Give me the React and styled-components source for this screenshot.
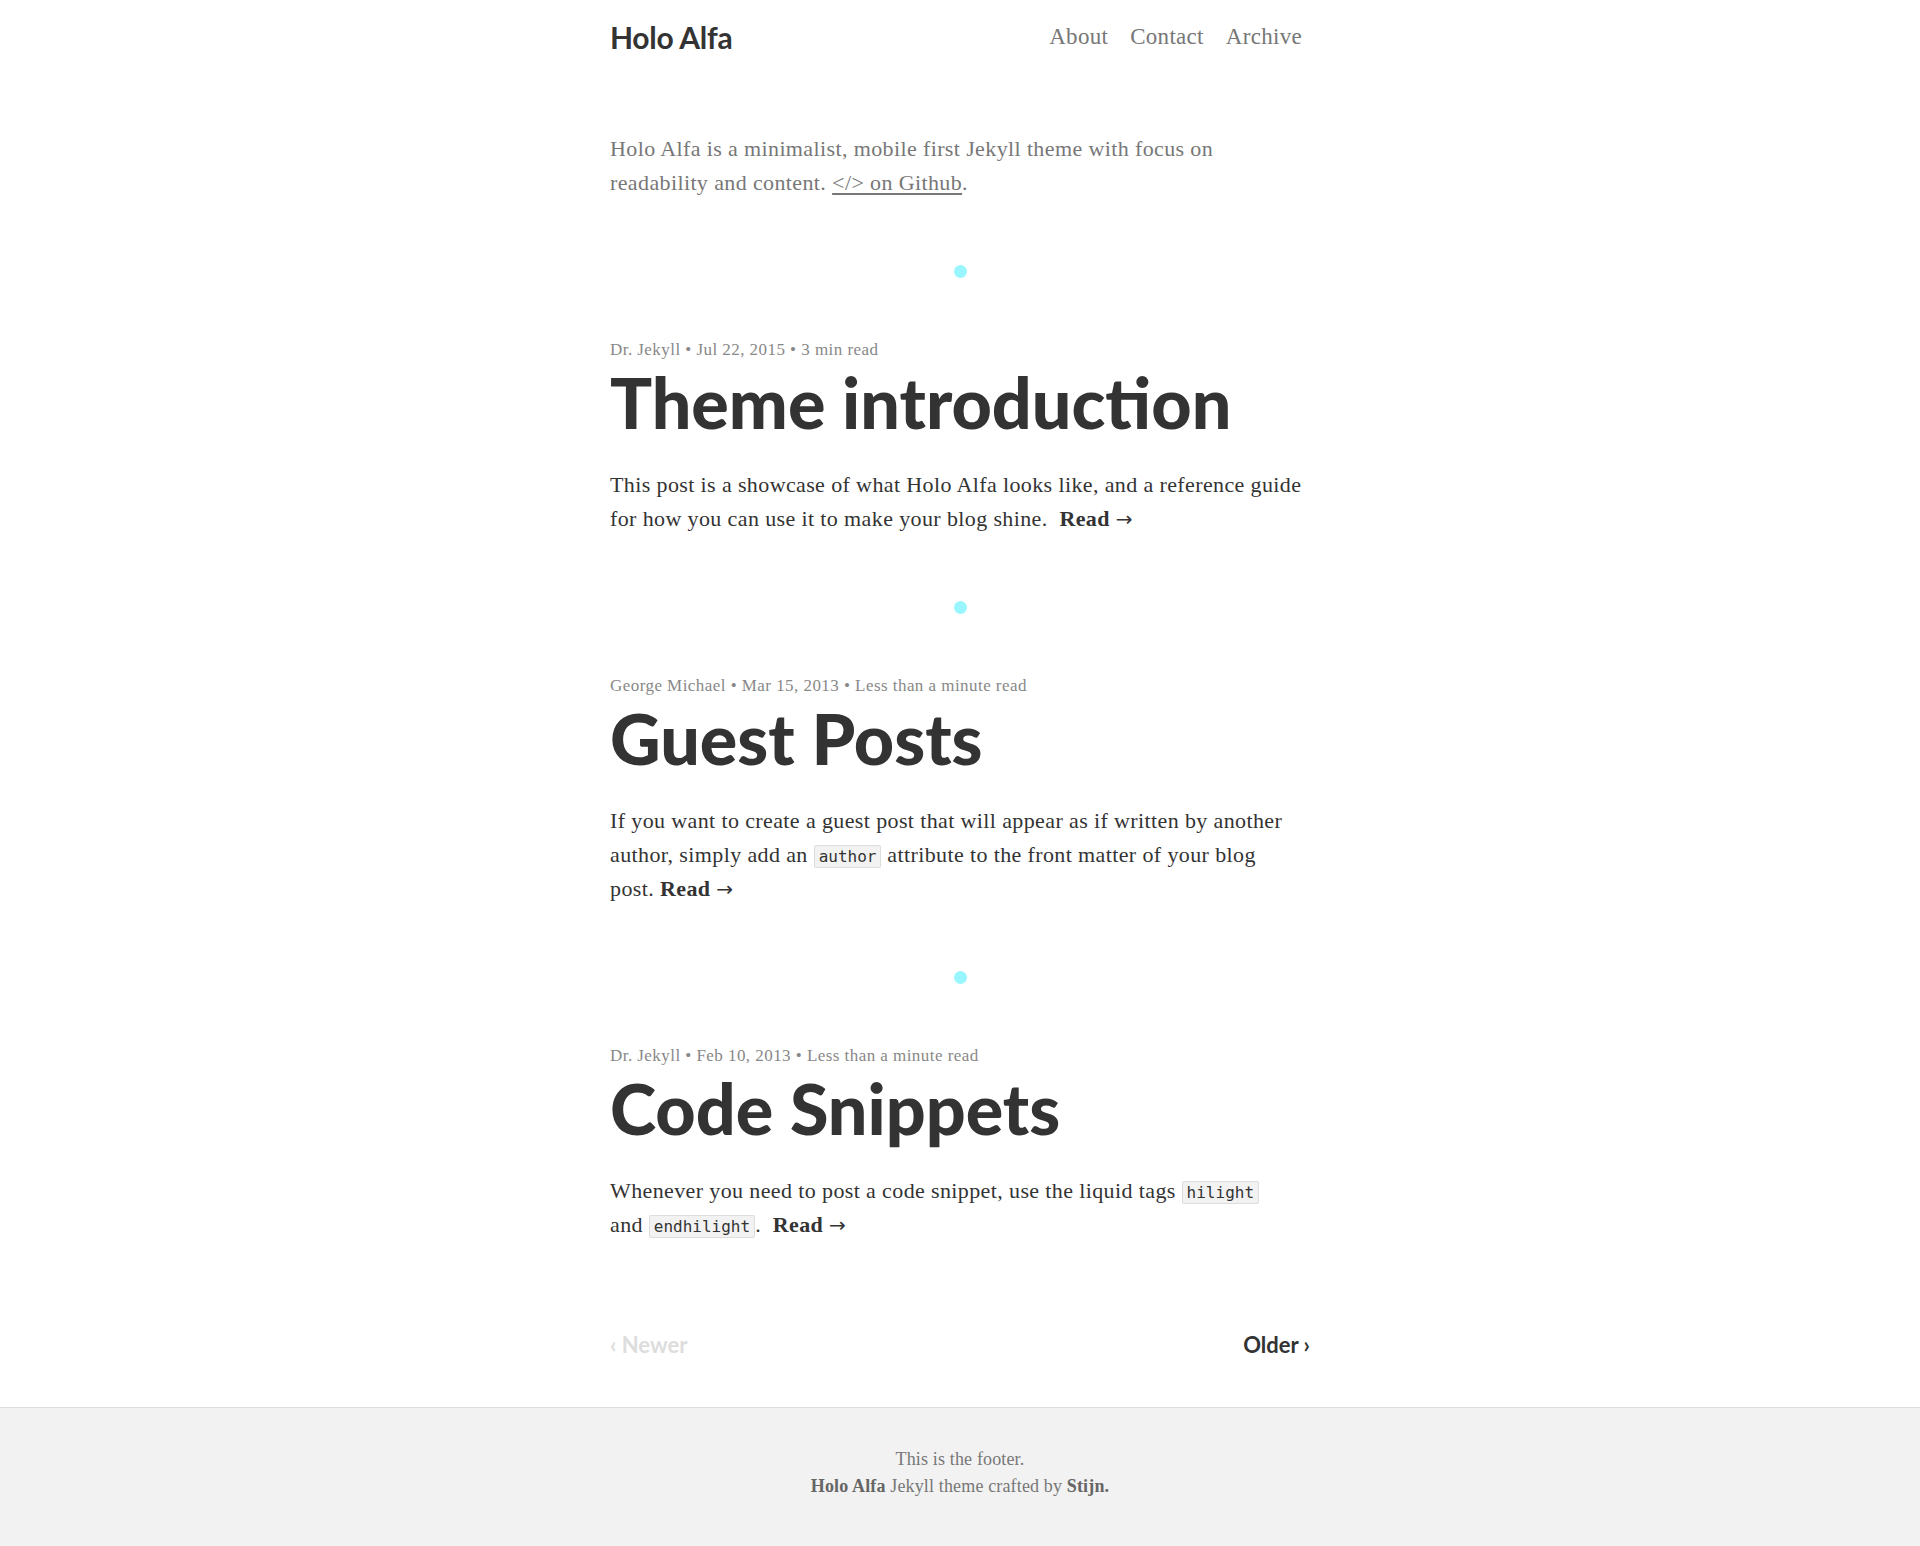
import styled, { createGlobalStyle } from "styled-components";

const GlobalStyle = createGlobalStyle`
  html, body {
    margin: 0;
    padding: 0;
    background: #fff;
  }
  body {
    font-family: "Liberation Serif", "Times New Roman", serif;
    color: #333;
    -webkit-font-smoothing: antialiased;
  }
  * {
    box-sizing: border-box;
  }
`;

const Page = styled.div`
  min-height: 1546px;
  display: flex;
  flex-direction: column;
`;

const Header = styled.header`
  width: 700px;
  margin: 0 auto;
  height: 74px;
  display: flex;
  align-items: center;
  justify-content: space-between;
`;

const Brand = styled.a`
  font-family: Lato, "Open Sans", sans-serif;
  font-weight: 700;
  font-size: 30px;
  color: #333;
  text-decoration: none;
  letter-spacing: -0.3px;
`;

const Nav = styled.nav`
  display: flex;
  gap: 22px;
  padding-right: 8px;
`;

const NavLink = styled.a`
  font-size: 23px;
  letter-spacing: 0.3px;
  color: #777;
  text-decoration: none;
`;

const Main = styled.main`
  width: 700px;
  margin: 0 auto;
  flex: 1;
`;

const Intro = styled.p`
  margin: 58px 0 0;
  font-size: 22px;
  letter-spacing: 0.38px;
  line-height: 34px;
  color: #777;
`;

const IntroLink = styled.a`
  color: #777;
  text-decoration: underline;
  text-underline-offset: 3px;
`;

const Post = styled.article``;

const Dot = styled.div`
  width: 13px;
  height: 13px;
  border-radius: 50%;
  background: #99f6ff;
  margin: 65px auto 60px;
`;

const Meta = styled.div`
  font-size: 17px;
  letter-spacing: 0.45px;
  line-height: 24px;
  color: #888;
`;

const Title = styled.h2`
  font-family: Lato, "Open Sans", sans-serif;
  font-weight: 900;
  font-size: 70px;
  line-height: 79px;
  letter-spacing: 0;
  color: #333;
  margin: 1px 0 26px;
`;

const Excerpt = styled.p`
  margin: 0;
  font-size: 22px;
  letter-spacing: 0.38px;
  line-height: 34px;
  color: #333;
`;

const Code = styled.code`
  font-family: "DejaVu Sans Mono", "Liberation Mono", monospace;
  font-size: 16px;
  line-height: 1;
  letter-spacing: 0;
  background: #f2f2f2;
  border: 1px solid #ddd;
  border-radius: 2px;
  padding: 1px 4px;
  color: #333;
`;

const Keep = styled.span`
  white-space: nowrap;
`;

const ReadMore = styled.a`
  font-weight: 700;
  color: #333;
  text-decoration: none;
  white-space: nowrap;
`;

const Arrow = styled.span`
  font-family: "DejaVu Sans", sans-serif;
  font-weight: 400;
  font-size: 20px;
  line-height: 1;
`;

const Pagination = styled.nav`
  display: flex;
  justify-content: space-between;
  align-items: center;
  margin: 87px 0 48px;
  height: 30px;
`;

const PageLink = styled.a`
  font-family: Lato, "Open Sans", sans-serif;
  font-weight: 700;
  font-size: 22px;
  color: ${({ $disabled }) => ($disabled ? "#ddd" : "#333")};
  text-decoration: none;
`;

const Footer = styled.footer`
  background: #f2f2f2;
  border-top: 1px solid #ddd;
  padding: 38px 0 47px;
  text-align: center;
`;

const FooterLine = styled.p`
  margin: 0;
  font-size: 18px;
  letter-spacing: 0.15px;
  line-height: 27px;
  color: #777;
`;

const FooterStrong = styled.span`
  font-weight: 700;
  color: #666;
`;

const posts = [
  {
    author: "Dr. Jekyll",
    date: "Jul 22, 2015",
    read: "3 min read",
    title: "Theme introduction",
    body: (
      <>
        This post is a showcase of what Holo Alfa looks like, and a reference guide for how you can use it to make your
        blog shine.&nbsp;{" "}
      </>
    ),
  },
  {
    author: "George Michael",
    date: "Mar 15, 2013",
    read: "Less than a minute read",
    title: "Guest Posts",
    body: (
      <>
        If you want to create a guest post that will appear as if written by another author, simply add an{" "}
        <Code>author</Code> attribute to the front matter of your blog <Keep>post.</Keep>
        {"\u00a0"}
      </>
    ),
  },
  {
    author: "Dr. Jekyll",
    date: "Feb 10, 2013",
    read: "Less than a minute read",
    title: "Code Snippets",
    body: (
      <>
        Whenever you need to post a code snippet, use the liquid tags <Code>hilight</Code>{" "}
        <Keep>
          and <Code>endhilight</Code>.
        </Keep>
        &nbsp;{" "}
      </>
    ),
  },
];

const App = () => {
  return (
    <Page>
      <GlobalStyle />
      <Header>
        <Brand href="#/">Holo Alfa</Brand>
        <Nav>
          <NavLink href="#/">About</NavLink>
          <NavLink href="#/">Contact</NavLink>
          <NavLink href="#/">Archive</NavLink>
        </Nav>
      </Header>

      <Main>
        <Intro>
          Holo Alfa is a minimalist, mobile first Jekyll theme with focus on readability and content.{" "}
          <IntroLink href="#/">&lt;/&gt; on Github</IntroLink>.
        </Intro>

        {posts.map((post) => (
          <Post key={post.title}>
            <Dot />
            <Meta>
              {post.author} • {post.date} • {post.read}
            </Meta>
            <Title>{post.title}</Title>
            <Excerpt>
              {post.body}
              <ReadMore href="#/">
                Read <Arrow>→</Arrow>
              </ReadMore>
            </Excerpt>
          </Post>
        ))}

        <Pagination>
          <PageLink $disabled>‹ Newer</PageLink>
          <PageLink href="#/">Older ›</PageLink>
        </Pagination>
      </Main>

      <Footer>
        <FooterLine>This is the footer.</FooterLine>
        <FooterLine>
          <FooterStrong>Holo Alfa</FooterStrong> Jekyll theme crafted by <FooterStrong>Stijn.</FooterStrong>
        </FooterLine>
      </Footer>
    </Page>
  );
};

export default App;
